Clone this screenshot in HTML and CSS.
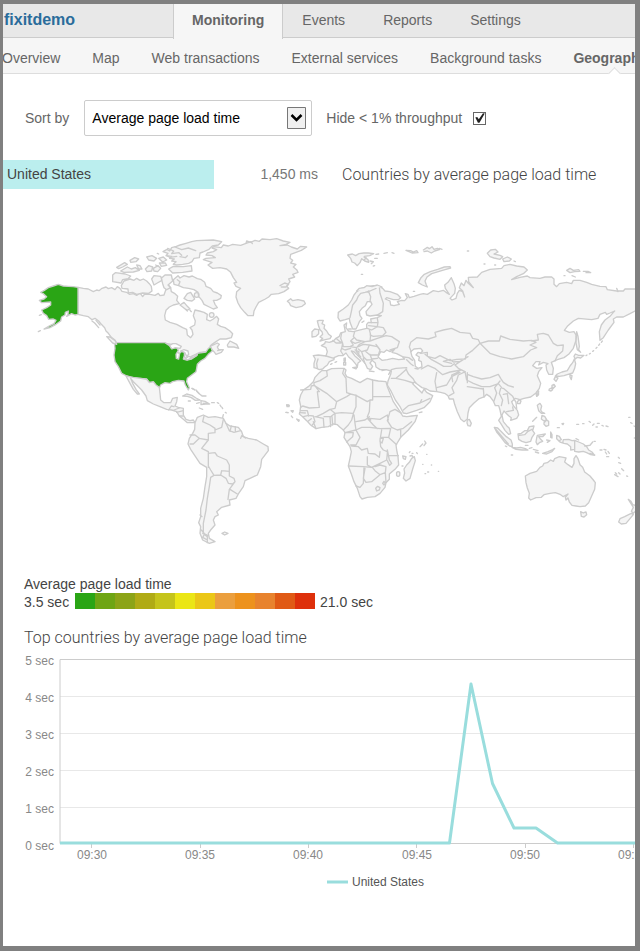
FILE: index.html
```html
<!DOCTYPE html>
<html lang="en">
<head>
<meta charset="utf-8">
<title>fixitdemo - Geography</title>
<link rel="stylesheet" href="styles.css">
</head>
<body>
<header>
  <div class="topbar">
    <a class="brand" href="#">fixitdemo</a>
    <nav class="tabs" aria-label="Main">
      <a class="tab active" href="#">Monitoring</a>
      <a class="tab" href="#">Events</a>
      <a class="tab" href="#">Reports</a>
      <a class="tab" href="#">Settings</a>
    </nav>
  </div>
  <nav class="subnav" aria-label="Monitoring">
    <a href="#">Overview</a>
    <a href="#">Map</a>
    <a href="#">Web transactions</a>
    <a href="#">External services</a>
    <a href="#">Background tasks</a>
    <a class="current" href="#">Geography</a>
  </nav>
</header>
<main>
  <form class="filters">
    <label for="sort">Sort by</label>
    <span class="picker">
      <select id="sort"><option>Average page load time</option></select>
      <svg class="arrow" viewBox="0 0 19 22" aria-hidden="true"><path d="M.5.5h18v21H.5z" fill="#f0f0f0" stroke="#777"/><path d="M4.500 8l5 5 5-5" fill="none" stroke="#000" stroke-width="2.500"/></svg>
    </span>
    <label for="hide">Hide &lt; 1% throughput</label>
    <input class="check" id="hide" type="checkbox" checked>
  </form>
  <section class="countries">
    <div class="country">
      <span class="bar">United States</span>
      <span class="value">1,450 ms</span>
    </div>
    <h2>Countries by average page load time</h2>
  </section>
  <svg class="map" viewBox="3 230 632 320" role="img" aria-label="World map of page load time">
    <!-- North America -->
    <g transform="translate(0 225) scale(.33333)">
      <path d="M234 187L250 190 265 192 280 200 290 195 297 197 306 190 318 186 325 191 335 188 345 194 352 185 360 190 366 199 380 202 388 208 400 206 410 211 420 204 428 215 434 207 450 208 465 211 475 205 480 212 492 210 497 196 505 180 512 188 514 200 525 206 533 214 530 226 538 236 520 240 508 246 498 256 494 272 496 285 510 292 530 298 548 308 560 313 562 330 572 338 579 328 576 315 570 308 584 300 586 288 580 272 585 255 598 258 612 262 622 268 620 284 630 288 640 282 650 274 656 282 652 298 662 304 675 308 690 318 698 326 694 338 678 342 660 342 648 350 636 358 630 364 640 360 652 354 658 358 652 366 656 374 670 374 664 382 648 388 642 380 637 375 632 366 620 380 600 382 575 397 562 402 530 380 515 358 490 354H350L345 345 335 338 325 325 318 318 314 308 304 298 296 288 285 280 276 284 265 275 250 272 234 268z"/>
      <path d="M234 187L220 185 205 184 190 183 175 178 160 183 145 188 133 196 122 202 130 206 140 215 132 222 118 226 125 233 152 231 152 240 140 248 125 255 130 265 140 272 146 283 160 282 168 286 162 296 150 302 132 312 150 308 168 298 182 288 185 276 195 270 196 262 205 258 204 268 200 274 215 266 225 270 234 268z" class="hot"/>
      <path d="M343 353H495L505 360 515 362 514 370 530 368 535 376 528 388 529 400 536 402 539 385 545 379 553 380 553 392 550 402 560 405 575 402 590 392 592 385 618 381 625 370 632 366 637 378 625 388 615 400 602 408 592 418 590 430 588 440 575 450 562 460 560 470 568 488 565 495 556 480 552 468 535 466 518 470 510 475 495 473 482 480 478 490 468 482 460 472 448 472 440 462 420 460 400 460 380 453 365 445 355 425 345 410 342 390 345 370z" class="hot"/>
      <path d="M508 362L518 356 528 356 544 364 540 370 526 368 516 372zM542 378L552 374 564 378 566 388 560 394 554 382zM556 402L566 394 576 398 562 405zM574 394L592 386 592 390 578 398z" class="water"/>
      <path d="M338 150L346 143 376 147 392 153 384 161 368 164 363 174 338 170zM364 182L372 168 390 162 402 166 410 160 420 166 430 162 440 168 448 176 454 184 456 198 446 205 428 204 410 208 398 202 385 204 384 192 366 190zM455 162L462 152 482 154 486 166 472 174 462 180zM488 176L484 160 495 150 514 150 518 168 504 180 512 188 500 194 492 188zM350 127L364 119 374 113 382 118 368 126 356 131zM390 106L404 98 416 102 408 110 392 112zM362 138L382 126 394 132 406 128 418 136 400 141 372 142zM410 120L420 122 426 132 416 132zM436 132L446 122 458 126 455 138 441 140zM460 130L474 122 482 130 473 140 462 138zM440 96L456 92 470 100 462 108 446 105zM476 100L490 96 500 105 488 111zM478 114L496 114 500 121 484 124zM506 132L520 124 550 125 574 122 576 138 548 142 518 144z"/>
      <path d="M489 80L501 73 509 78 515 68 529 64 540 60 558 55 575 50 590 47 640 45 665 50 655 60 637 63 627 73 609 81 600 84 598 98 582 100 576 110 566 115 548 118 530 120 520 118 528 110 515 108 523 102 509 100 515 94 498 92 504 85zM520 164L534 152 540 159 552 152 567 156 577 153 592 161 602 163 614 172 618 184 632 190 640 200 652 204 664 212 662 220 650 226 640 226 645 238 652 248 640 252 628 246 612 238 606 226 596 214 594 202 582 194 566 190 550 188 536 182 522 178zM552 220L562 206 572 202 578 212 584 222 576 228 562 226zM583 210a7 7 0 1 0 14 0 7 7 0 1 0-14 0M540 240L552 232 562 244 570 252 560 256 548 246zM628 270a7 7 0 1 0 14 0 7 7 0 1 0-14 0M682 360L690 348 698 352 710 358 716 370 702 366 684 366zM320 335L330 336 346 348 350 358 338 354z"/>
      <path class="line" d="M503 70L521 78 515 86 537 83 545 91M525 66L545 74 565 69 587 77M540 95L556 98 562 92M500 92L510 97 530 94M532 164L540 170 536 180M653 377L664 374M276 288L284 294 296 308M288 286L300 300M118 271L124 269M115 320L121 317M558 253L562 258M570 256L574 260M472 85L476 87M467 120L475 124M576 490L584 494M590 498L598 506"/>
    </g>
    <!-- Greenland and Iceland -->
    <g transform="translate(180 225) scale(.33333)">
      <path d="M70 104L78 100 106 98 96 92 78 90 82 84 100 80 110 74 96 69 102 65 124 68 130 60 145 63 158 58 182 61 198 55 200 48 212 52 225 46 238 49 246 42 270 44 290 41 310 48 330 52 318 58 300 62 322 60 334 66 352 72 362 64 380 66 364 76 348 82 332 88 330 100 338 106 332 114 348 118 340 126 350 134 354 142 338 148 344 156 326 162 330 170 320 184 326 190 312 200 296 206 274 208 266 216 256 222 236 232 228 246 222 258 220 272 204 272 194 262 182 248 174 234 168 216 170 200 182 190 168 184 162 174 170 172 160 158 152 142 140 132 120 128 98 130 84 120 96 112zM322 229L332 221 338 227 354 224 372 228 376 236 366 244 348 248 332 242 328 234z"/>
      <path class="line" d="M198 55L213 50 217 56M300 182L314 174 326 178 318 186 304 186"/>
    </g>
    <!-- Europe and Asia -->
    <g transform="translate(290 235) scale(.33333)">
      <path d="M270 155L278 160 285 168 300 170 322 178 332 188 325 194 310 194 290 188 286 192 300 198 302 210 312 212 328 208 322 200 335 196 344 197 352 188 346 176 354 178 358 188 372 184 390 178 400 176 412 178 430 167 445 170 460 166 468 172 478 178 466 160 464 150 474 142 484 128 492 146 496 160 494 175 480 190 486 195 498 190 502 175 508 166 518 170 524 186 518 168 508 158 514 144 522 152 528 136 534 144 550 158 536 140 535 127 562 126 575 112 600 103 635 100 642 92 660 88 680 93 702 96 712 105 700 116 680 125 665 134 690 127 712 123 720 128 750 130 765 126 785 126 792 132 792 148 800 155 808 146 830 142 845 146 850 136 870 136 890 142 905 148 930 154 948 155 952 164 980 168 1000 168 1005 162 1035 162 1050 164V224L1035 228 1020 236 1000 246 980 246 970 252 972 262 955 285 940 308 930 316 928 290 934 270 945 255 960 244 970 232 974 228 960 234 950 238 946 232 930 238 924 250 905 254 865 250 850 258 832 274 823 286 838 292 852 290 858 300 858 316 850 340 836 358 822 368 802 374 784 382 790 400 788 418 776 418 770 405 768 390 774 386 760 382 746 390 750 380 738 380 728 392 740 400 756 398 746 410 742 422 752 445 748 460 738 474 722 486 702 490 690 494 676 490 665 500 670 512 682 526 686 540 680 550 662 556 664 548 656 542 650 536 642 528 636 540 640 560 650 572 658 580 662 596 656 598 645 586 634 568 626 556 634 544 630 525 626 512 616 512 610 498 600 485 590 478 582 486 566 492 552 504 538 518 534 534 532 552 522 560 512 552 502 530 494 508 490 492 478 492 474 482 466 476 452 472 440 470 420 468 410 462 396 458 382 448 374 440 368 446 380 458 390 468 396 474 402 462 410 472 428 482 420 500 402 518 380 526 350 536 340 534 330 515 316 495 304 470 292 450 294 438 302 418 304 408 288 404 270 404 258 396 256 384 246 376 240 384 248 394 242 404 232 400 226 386 214 372 202 360 192 350 184 348 194 362 212 378 204 384 202 396 198 388 188 376 176 366 168 354 158 362 146 362 132 368 132 374 118 380 112 390 104 396 98 402 88 404 80 400 72 398 72 385 76 372 70 362 85 360 108 363 112 350 108 338 94 332 104 326 106 320 118 322 130 318 138 310 148 304 152 294 166 290 162 270 170 264 168 278 176 288 190 290 214 284 230 280 230 268 235 262 244 263 242 252 262 248 274 242 262 240 240 243 230 240 228 230 238 218 246 208 242 200 232 200 226 212 216 220 208 230 210 242 216 250 208 260 204 270 198 282 188 282 180 262 178 250 166 254 150 258 144 248 145 232 160 222 175 210 185 195 192 180 200 170 215 160 235 154 250 152 262 152z"/>
      <path d="M264 366L272 350 282 352 290 345 300 350 314 342 306 352 320 356 336 364 344 372 326 374 308 370 292 374 276 376zM362 350L372 342 392 340 398 348 392 354 384 352 378 360 388 366 386 376 394 380 396 396 384 400 376 394 374 376 366 364z" class="water"/>
      <path class="line" d="M180 248L184 230 188 210 200 195 204 185 212 175 225 172 240 168 258 160M240 200L242 185 235 168M268 155L270 175 280 205 278 230 262 240M244 263L264 262 262 250M236 272L262 275 264 262M232 280L245 285 262 275 280 278 288 292 278 302 250 304 240 300M194 290L190 304 200 315 225 320 240 318 242 300 238 284M155 293L152 310 158 325 160 335H180L190 330 182 318 192 308M138 310L150 320 158 325 155 340 152 348 160 360M128 316L138 324 152 324M155 340L165 345 182 340M182 318L195 325 212 320M180 335L200 338 208 328 225 320M205 335L220 328 238 330 232 345 215 350 205 342M238 330L262 335 270 345 265 360H240L228 350M240 318L262 310 288 302 305 305 328 320 322 338 300 345M258 328L270 344M240 358L245 372 262 370M215 350L220 365 230 375 246 374M195 345L207 350 205 362M200 338L198 348 212 366M108 363L132 370M84 372L80 385 82 400M220 370L224 384M340 366L356 368 368 376M350 374L362 386 370 392M364 350L358 336 362 322 380 308 415 312 438 305 435 292 460 285 485 280 510 292 540 295 548 310 565 314 570 325M392 355L412 352 412 364 435 370 450 362 480 377 500 373 526 372 528 360 548 346 570 325M405 358L425 374 447 386 461 394 483 394 493 386M375 400L384 402M348 402L356 418 370 432 376 444M394 402L414 391 436 401 458 419 480 411 514 405M440 413L435 439 440 468M488 440L485 420 507 410M440 458L470 450 485 425 510 412M570 325L595 318H628L632 303 660 313 700 318 725 316 738 322 720 330 740 338 722 345 700 365 665 372 630 365 600 355 585 340 570 325M725 318L745 315 742 298 760 295 775 300 790 325 802 332 820 330 818 348 802 362 795 378M534 365L510 380 495 390 505 400 525 410 530 435 550 445 575 455 600 455 625 446 637 460M485 385L460 379 480 373 490 381 512 379M296 418L304 404 318 400 350 398M304 430H318L330 420 350 402M318 430L345 436 370 444M340 525L355 512 390 504 395 494M390 504L420 490M532 413L532 443M532 418L550 425 575 432 600 428 625 418 632 430 640 442 655 452 670 456M532 455L580 462M580 460L582 486M630 438L614 458 620 474 612 498M632 460L628 475 638 495 634 512M640 460L654 472 668 484 678 502 680 520M640 478L652 476 656 506M650 530L670 526 668 516M526 410L505 420 500 436 486 458 492 474 478 482"/>
      <!-- British Isles, Arctic islands -->
      <path d="M82 258L88 256H100L96 266 104 270 102 280 110 288 116 298 124 304 120 311 106 314 90 318 98 310 90 306 98 298 96 290 90 284 86 274zM66 290L74 282 86 284 86 296 78 304 66 306zM173 60L187 57 197 62 207 56 221 54H235L251 56 239 62 223 64 229 69 221 76 215 71 210 83 202 92 194 84 186 81 182 70zM222 66L234 74 236 82 224 78M240 78L250 80 244 86M258 58L266 57M254 70H262M282 55L292 53M306 53L312 55M214 118H218M250 93L254 92M348 46L362 47 370 51 380 47 384 53 366 54zM400 45L412 37 418 41 426 35 432 43 442 40 448 44 434 48 424 54 412 48 402 50M448 40L456 43M385 143L393 128 403 118 421 110 443 103 463 96 480 95 482 99 465 104 445 110 425 116 411 126 405 138 409 150 412 156 397 150zM370 169H374M532 48H536M122 388L126 386M135 382L140 380M162 370L166 369 166 378 162 378zM161 382H167V390H161zM188 398L202 396 198 402zM238 408L252 410M276 407L288 404M216 262L222 258M176 282L184 282M200 168L208 160 222 158 230 152 246 155 262 150 276 156"/>
      <path d="M592 55L602 45 616 43 624 51 612 57 630 61 638 65 630 73 612 69 600 65zM638 72L652 66 664 72 658 78 642 80zM672 78L676 80M582 87H585M614 90H617M830 106L840 100 850 106 866 104 870 109 854 110 840 113zM880 109H894L902 113H888M846 122L856 126M822 122H825M980 160L984 170"/>
      <!-- Sakhalin and Japan -->
      <path d="M860 290L864 304 868 334 866 344 872 352 862 344 858 324zM856 357L866 361 882 361 872 369 862 367 856 372 852 364zM853 372L857 386 854 400 848 414 834 418 822 422 808 424 796 423 802 417 816 411 832 407 840 393 848 383zM796 425L804 429 798 439 792 433zM840 420L846 422 844 434 840 426zM786 451L792 448 796 454 790 460 786 456zM778 462L784 459 788 464 783 468 777 466zM738 476L744 470 746 478 740 484zM888 362L891 360M898 357L901 355M908 349L911 347M918 340L921 337M926 331L929 327M934 322L937 318"/>
    </g>
    <!-- Central and South America -->
    <g transform="translate(100 370) scale(.33333)">
      <path d="M78 18L100 22 122 25 140 28 148 38 160 35 168 45 178 52 180 70 182 90 192 98H212L218 85 232 82 230 95 225 108 235 112 250 115V135L258 148 270 152 280 150 285 158 275 158 262 158 250 148 238 138 230 125 215 120 200 118 180 110 160 102 142 92 138 78 125 60 110 45 100 35 92 25 98 40 108 58 118 72 112 72 100 58 90 40z"/>
      <path d="M285 158L292 142 310 135 325 142 345 140 370 145 378 160 390 168 415 172 425 185 430 200 445 205 470 210 490 222 504 230 505 242 485 268 482 290 472 315 450 325 435 332 430 350 415 372 408 385 388 390 390 405 365 412 350 425 355 435 345 440 340 450 345 465 332 480 325 490 328 505 345 515 328 520 308 510 300 490 302 470 296 458 302 440V415L310 385 315 350 320 320V292L300 280 288 262 272 238 264 222 268 205 278 190 284 178z"/>
      <path class="line" d="M206 120L214 108 222 110M222 120L238 114M230 127L250 122M238 138H250M312 138L308 155 330 165 345 175V188L325 190M270 195H285L298 205 280 222 270 222M298 205L325 210V190M325 210L305 235 325 245V292M370 148L365 172 345 180M378 160L388 182 402 187 422 182M394 168L390 184M406 170V186M325 250L345 248 352 258 380 270 388 285V302M365 302L362 315 342 316 332 300 325 288M342 316L332 322 328 350 322 385 318 420 310 460V490L325 497M365 302L388 304 388 318 402 325 405 335 398 342 385 340 378 325 362 315M405 335L388 358 384 388M390 358L412 372M422 205L426 196 436 204M304 480L314 492 308 502 322 510M300 435L306 440M308 490L322 500V518"/>
      <path d="M248 78L260 72 276 76 288 84 300 90 286 91 274 83 262 79zM303 92L315 94 329 102 317 102 303 104zM290 100L298 98M335 98H343M298 114L308 118M352 98L356 100M360 105L363 110M366 112L368 116M376 127L379 129M370 134L368 142M265 93H271M276 55L284 60M288 60L294 68M296 70L306 78H318M310 100H326M366 490L374 486 384 490 374 495zM560 105H566M558 127L564 128"/>
    </g>
    <!-- Africa -->
    <g transform="translate(280 350) scale(.33333)">
      <path d="M318 95L295 93 278 90 262 85 250 92 240 98 228 92 215 85 200 80 195 70 198 60 192 55H175L155 56 140 62 125 62 118 68 105 82 100 95 85 110 70 120 62 135 58 150 62 168 60 185 58 192 68 200 80 212 92 225 108 236 125 232 145 230 160 222 172 224 180 232 190 240 195 248 192 262 200 275 210 290 214 305 210 325 205 348 214 372 222 395 232 415 240 440 246 447 262 442 285 440 300 430 315 412 318 398 328 388V372L345 358 356 345 354 320 350 300 348 285 362 262 385 240 405 215 412 196 395 198 380 200 368 198 360 185 350 170 340 155 330 130 322 110z"/>
      <path class="line" d="M140 62L142 78 120 92 102 98 102 106 94 108 92 118 62 120M102 106L140 130 170 155 200 140 212 132M104 106L118 125 112 125 118 172 88 174 68 168 62 172M192 56L188 70 198 85 200 128 212 132 228 136 262 155 270 150M278 90V150H270M278 140H330M170 155L165 175 150 178 130 190 110 200M270 150L268 185 262 200 272 210M165 190L185 188 220 190 228 170 228 135M220 192L215 210 205 225 190 240M222 195L225 220 228 240 195 248M228 215L255 210 268 200M262 205L280 225 292 236M228 240L245 232H270L300 236M270 205L300 208 322 195 325 210M330 185L345 178 365 190M330 185L322 212 335 232 352 240 370 235 395 215M362 240V262M300 236L332 235 326 262H305M325 262L350 284M305 240L300 270 302 290 310 300 322 305 322 317H355M215 288L235 290 245 300 262 295 265 310 285 312 298 322 300 305M228 240L240 262 228 285H212M195 248H220L218 260 200 276M206 348L250 350 275 352 300 340 320 330 322 310M262 320V345L275 352M322 300L328 330 335 340 329 346 322 332M285 350L300 345 318 350 316 368 300 374 285 362 277 352M252 352L250 400 240 412 228 408M255 355L250 385 258 397 275 395 300 374M316 368L318 398M62 182H82L86 198M60 188L76 189M70 200L86 196 100 198 105 215 95 227M84 214L94 206M100 215L108 236M105 200L130 205 132 232M132 200H150L152 230M130 190L150 178 165 190 150 202M156 200L158 225M165 192V222M287 415L293 409 300 413 298 420 290 423zM308 400L312 394 316 399 312 405zM300 265H310L306 279 300 275"/>
      <path d="M395 325L403 320 406 332 398 357 390 385 378 393 370 385 374 369 372 357 380 345 388 337zM350 372a5 5 0 1 0 9 0 5 5 0 1 0-9 0M368 318L378 320 376 328 370 326zM390 318L396 316 398 321M388 308L390 305M396 310H399M410 308L412 311M366 348H369M420 290L428 282M434 273L438 279 432 287M440 313H441M428 343H429M454 345H455M475 364H476M435 371H437M443 366H446M20 165L28 166 27 170 21 170zM18 187L24 188M33 182H40L38 187zM34 198L38 203M50 207L58 210 56 214zM418 188L426 186"/>
    </g>
    <!-- South-East Asia and Oceania -->
    <g transform="translate(440 370) scale(.33333)">
      <path d="M256 318L270 310 290 304 300 292 308 288 312 280 322 278 332 270 340 274 344 266 358 260 370 262 378 264 374 276 384 284 396 292 402 280 402 266 408 257 414 266 420 284 428 292 434 306 450 318 460 330 466 338 464 358 454 380 446 398 436 408 420 410 408 408 396 406 388 396 384 384 378 390 376 382 384 372 370 380 362 374 346 368 330 370 312 374 304 382 288 383 272 390 266 384 268 370 262 354 258 338zM422 425L430 429 438 426 440 434 432 441 424 439zM565 388L573 394 578 404 586 406 590 420 580 430 574 424 580 412zM574 430L580 434 570 446 558 460 544 462 536 456 540 446 554 440 566 434z"/>
      <path d="M163 172L173 174 185 186 199 200 213 210 217 222V230L209 228 195 218 183 202 170 186zM168 178L188 202 205 222M216 232L230 234 242 232 256 236 264 240 246 240 228 238zM234 192L244 190 254 182 262 182 268 170 282 168 278 182 284 190 276 202 272 214 258 218 246 214 236 208zM238 196L254 194 264 184 276 178M292 196L304 194 316 192 308 200 296 200 302 208 308 214 298 218 292 224 288 216 290 204zM332 186L336 194V204L332 202zM320 210L330 212 322 217M308 250L324 245 338 239 344 235 336 245 320 252zM268 235L276 233M280 238L294 242M256 226H264M286 246L296 249M350 196L358 199 364 209 356 213 368 219 370 209 386 208 396 212 404 211 416 216 430 222 440 230 446 240 456 246 464 256 452 254 440 248 430 244 416 246 404 244 404 238 392 240 392 230 382 222 372 220 360 216 350 206zM404 211V244M408 206L416 210M434 228L450 226 458 216M292 106L300 100 305 108 302 120 306 126 314 130 304 130 296 122zM306 136L314 139 320 149 312 153 304 147zM312 158L320 150 326 154V166L318 169 312 163zM278 154L290 142M232 95L238 89 243 93 240 101 233 101zM82 150L88 148 94 160 91 168 84 167 81 159zM291 66L296 63 295 74 291 78zM214 255H218M196 228L200 230M352 173H358M366 161L371 160 369 164zM410 163H416M428 161H432M447 154L451 157M462 162L458 166M472 160H478M486 166L490 168M498 168L504 170M468 171H472M450 250L464 255M462 214H466M480 240H486M492 238L498 240M496 246L500 252M504 244L508 250M500 260H506M535 262L538 265M536 278L542 280M545 296L551 302M526 308L530 312M524 314L534 320M536 308L540 312M560 318L563 319M566 142H570M572 158L576 160M582 168L586 170M583 204H586"/>
    </g>
  </svg>
  <section class="scale">
    <div>Average page load time</div>
    <div class="ramp">
      <span>3.5 sec</span>
      <span class="swatches"><i class="s1"></i><i class="s2"></i><i class="s3"></i><i class="s4"></i><i class="s5"></i><i class="s6"></i><i class="s7"></i><i class="s8"></i><i class="s9"></i><i class="s10"></i><i class="s11"></i><i class="s12"></i></span>
      <span>21.0 sec</span>
    </div>
  </section>
  <section class="trend">
    <h2>Top countries by average page load time</h2>
    <svg class="chart" viewBox="3 651 632 242" role="img" aria-label="Average page load time by minute">
      <path class="grid" d="M60 696.500h575M60 733.500h575M60 770.500h575M60 807.500h575"/>
      <path class="axis" d="M635 659.500H60V843.500H635M91.500 844v4M200.500 844v4M308.500 844v4M416.500 844v4M525.500 844v4M633.500 844v4"/>
      <path class="series" d="M60 843H449.500L471 684 492.500 783.500 514 828H536L557.500 843H635"/>
      <g class="labels end">
        <text x="54" y="665">5 sec</text><text x="54" y="702">4 sec</text><text x="54" y="739">3 sec</text><text x="54" y="776">2 sec</text><text x="54" y="813">1 sec</text><text x="54" y="850">0 sec</text>
      </g>
      <g class="labels middle">
        <text x="92" y="859">09:30</text><text x="200" y="859">09:35</text><text x="308" y="859">09:40</text><text x="417" y="859">09:45</text><text x="525" y="859">09:50</text><text x="633" y="859">09:55</text>
      </g>
      <path class="series" d="M327 882h21"/>
      <text class="key" x="352" y="886">United States</text>
    </svg>
  </section>
</main>
</body>
</html>
```
FILE: styles.css
```css
* { box-sizing: border-box; }
body {
  margin: 0;
  min-height: 100vh;
  border: solid #808080;
  border-width: 4px 5px 5px 3px;
  overflow: hidden;
  background: #fff;
  color: #444;
  font: 14px/18px "Liberation Sans", Arial, sans-serif;
}
a { color: #666; text-decoration: none; }
h2 { margin: 0; color: #444; font: 300 16px/24px Roboto, "Liberation Sans", sans-serif; white-space: nowrap; }

.topbar { display: flex; height: 34px; background: #e8e8e8; border-bottom: 1px solid #ccc; }
.brand { width: 170px; padding-left: 1px; color: #2a6c9b; font-size: 16px; font-weight: bold; line-height: 32px; }
.tabs { display: flex; }
.tab { padding: 0 19px; line-height: 32px; }
.tab.active { height: 35px; padding: 0 18px; background: #f6f6f6; border: solid #ccc; border-width: 0 1px; font-weight: bold; }

.subnav { display: flex; gap: 32px; height: 36px; background: #f6f6f6; border-bottom: 1px solid #ddd; line-height: 40px; white-space: nowrap; }
.subnav a:first-child { margin-left: -1px; }
.subnav .current { position: relative; font-weight: bold; }
.subnav .current::after {
  content: "";
  position: absolute;
  left: 50%;
  bottom: -5px;
  width: 8px;
  height: 8px;
  border: solid #ddd;
  border-width: 1px 0 0 1px;
  background: #fff;
  transform: rotate(45deg);
}

.filters { display: flex; align-items: center; height: 36px; margin: 26px 0 24px 22px; color: #666; }
.picker { position: relative; width: 228px; margin: 0 14px 0 15px; }
.picker select { width: 100%; height: 36px; padding: 0 32px 0 7px; appearance: none; border: 1px solid #ccc; border-radius: 2px; background: #fff; color: #000; font: inherit; }
.arrow { position: absolute; right: 6px; top: 7px; width: 19px; height: 22px; pointer-events: none; }
.check { width: 13px; height: 13px; margin: 0 0 0 11px; appearance: none; border: 1px solid #666; background: #fff; }
.check:checked::before { content: ""; display: block; width: 11px; height: 11px; background: #222; clip-path: polygon(10% 46%, 28% 40%, 42% 62%, 80% 6%, 96% 10%, 48% 94%, 34% 94%); }

.countries { display: flex; align-items: center; gap: 23px; }
.country { display: flex; justify-content: space-between; width: 50%; padding-right: 1px; line-height: 29px; color: #777; }
.bar { width: 211px; padding-left: 4px; background: #bbeeee; color: #444; }

.map { display: block; width: 100%; margin-top: 41px; fill: #f5f5f5; stroke: #ccc; stroke-width: 4px; stroke-linejoin: round; stroke-linecap: round; }
.map .hot { fill: #2aa515; }
.map .water { fill: #fff; }
.map .line { fill: none; }

.scale { margin: 25px 0 0 21px; }
.ramp { display: flex; gap: 5px; }
.ramp span:first-child { width: 46px; }
.swatches { display: flex; height: 16px; }
.swatches i { width: 20px; }
.s1 { background: #2aa515; }
.s2 { background: #6ea514; }
.s3 { background: #8ca417; }
.s4 { background: #b0ab15; }
.s5 { background: #c5c41b; }
.s6 { background: #ebe615; }
.s7 { background: #ebc717; }
.s8 { background: #eb9f3e; }
.s9 { background: #ed921d; }
.s10 { background: #e8832e; }
.s11 { background: #e05a15; }
.s12 { background: #de300b; }

.trend h2 { margin: 15px 0 1px 21px; }
.chart { display: block; width: 100%; font-size: 12px; }
.grid { stroke: #e8e8e8; }
.axis { fill: none; stroke: #ccc; }
.series { fill: none; stroke: #99dddd; stroke-width: 3px; stroke-linejoin: round; }
.labels { fill: #888; }
.end { text-anchor: end; }
.middle { text-anchor: middle; }
.key { fill: #555; }
```
